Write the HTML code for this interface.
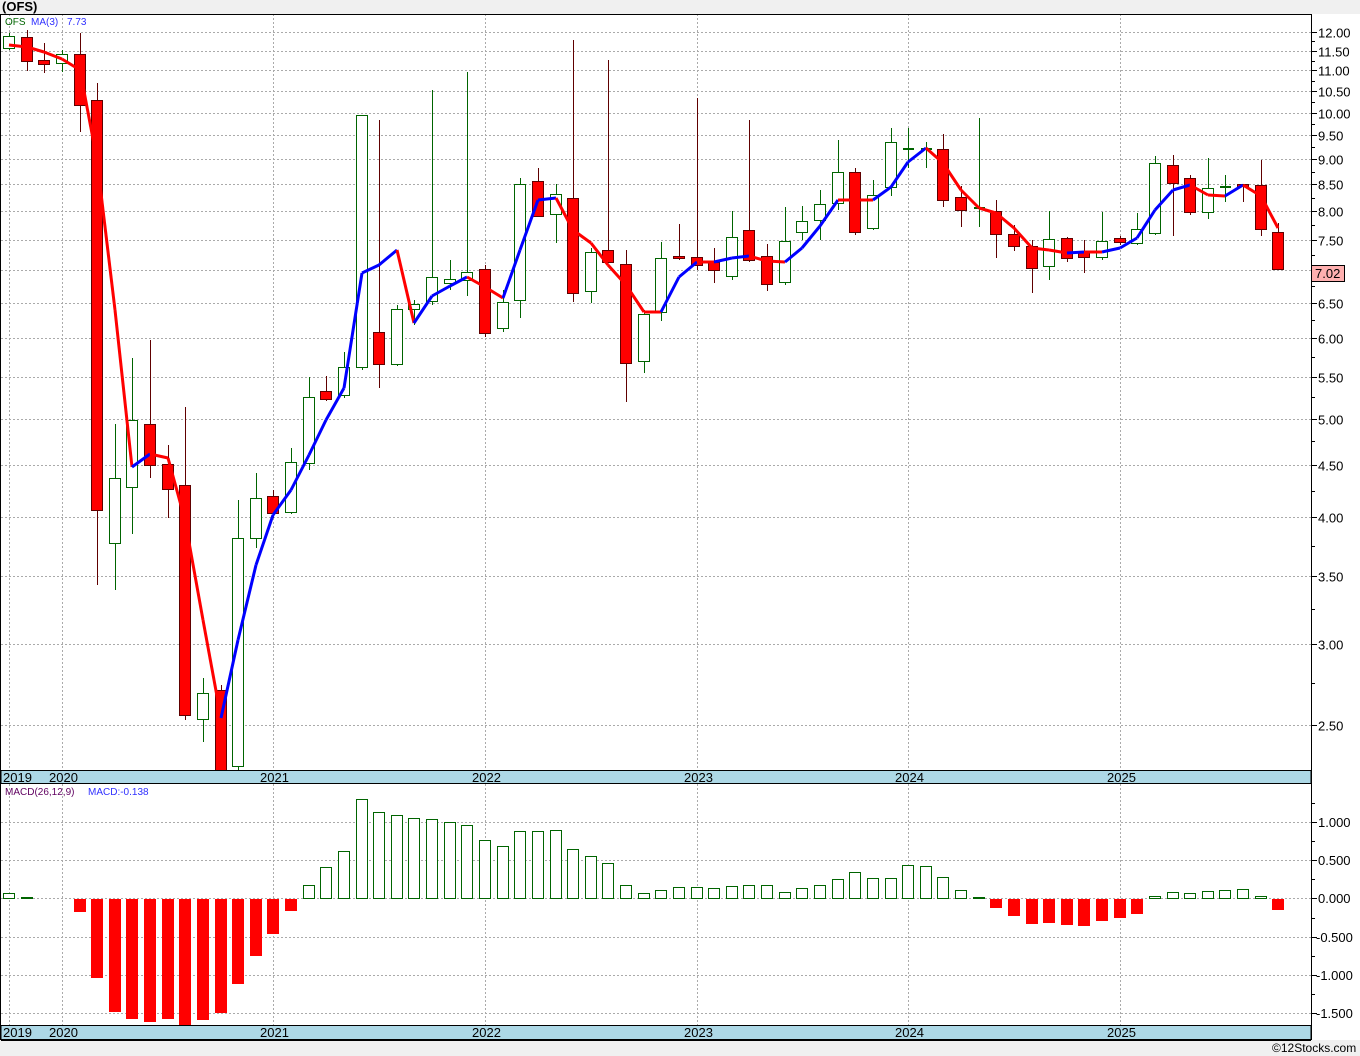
<!DOCTYPE html><html><head><meta charset="utf-8"><style>
body{margin:0;background:#f0f0f0;}
svg{display:block;font-family:"Liberation Sans",Tahoma,sans-serif;}
</style></head><body>
<svg id="s" width="1360" height="1056" xmlns="http://www.w3.org/2000/svg">
<rect x="0" y="0" width="1360" height="1056" fill="#f0f0f0"/>
<rect x="1" y="14" width="1310" height="1026" fill="#fff"/>
<rect x="1311" y="14" width="49" height="1026" fill="#fff"/>
<text x="2" y="11" font-size="13" font-weight="bold" fill="#000">(OFS)</text>
<g id="g"></g>
</svg>
<script>
var g=document.getElementById('g'),h='';
function ln(x1,y1,x2,y2,c,w,d){h+='<line x1="'+x1+'" y1="'+y1+'" x2="'+x2+'" y2="'+y2+'" stroke="'+c+'" stroke-width="'+(w||1)+'"'+(d?' stroke-dasharray="'+d+'"':'')+'/>';}
function tx(x,y,t,c,s){h+='<text x="'+x+'" y="'+y+'" font-size="'+(s||13)+'" fill="'+(c||'#000')+'">'+t+'</text>';}
function py(p){return 32+Math.log(12/p)*441.8;}
var P=[12,11.5,11,10.5,10,9.5,9,8.5,8,7.5,7,6.5,6,5.5,5,4.5,4,3.5,3,2.5];
P.forEach(function(p){var y=Math.round(py(p))+.5;ln(1,y,1311,y,'#aaa',1,'2,2');ln(1311,y,1317,y,'#000');if(p!=7)tx(1318,y+5,p.toFixed(2),'#000',13);});
for(var i=0;i<P.length-1;i++){var y=Math.round(py((P[i]+P[i+1])/2))+.5;ln(1311,y,1315,y,'#000');}
var YX=[9,62,273,485,697,908,1120];
YX.forEach(function(x){ln(x+.5,14,x+.5,770,'#aaa',1,'2,2');ln(x+.5,784,x+.5,1025,'#aaa',1,'2,2');});
var M=[[822,'1.000'],[860,'0.500'],[898,'0.000'],[937,'-0.500'],[975,'-1.000'],[1013,'-1.500']];
M.forEach(function(m){ln(1,m[0]+.5,1311,m[0]+.5,'#aaa',1,'2,2');ln(1311,m[0]+.5,1317,m[0]+.5,'#000');tx(m[0]==822||m[0]==860||m[0]==898?1318:1316,m[0]+5,m[1]);});
[803,841,879,918,956,994].forEach(function(y){ln(1311,y+.5,1315,y+.5,'#000');});
var C=[[36,48,33,50,1],[37,61,30,71,0],[60,64,43,73,0],[54,63,50,72,1],[54,105,33,132,0],[100,510,83,585,0],[478,543,424,590,1],[420,487,358,534,1],[424,465,340,478,0],[464,489,445,518,0],[485,715,407,720,0],[693,719,678,742,1],[690,770,685,770,0],[538,766,500,770,1],[498,538,473,548,1],[496,513,490,518,0],[462,512,448,514,1],[397,463,377,470,1],[391,399,376,401,0],[367,395,352,398,1],[115,367,115,370,1],[332,364,120,388,0],[309,364,305,366,1],[304,309,300,325,1],[277,301,90,305,1],[279,283,260,290,1],[272,280,72,296,1],[269,333,265,337,0],[302,328,290,332,1],[184,300,178,318,1],[181,216,168,216,0],[194,214,184,243,1],[198,293,40,302,0],[252,291,248,303,1],[250,262,60,263,0],[264,363,250,402,0],[314,361,310,373,1],[258,312,242,321,1],[256,258,224,260,0],[257,265,98,270,0],[262,270,248,283,0],[237,276,211,280,1],[230,260,120,262,0],[256,284,244,291,0],[241,282,207,285,1],[221,232,206,240,1],[204,220,190,240,1],[172,203,140,210,1],[172,232,168,235,0],[195,228,180,230,1],[142,187,128,196,1],[148,150,128,168,1],[148,150,142,168,1],[149,200,134,207,0],[197,210,186,227,0],[207,209,118,227,1],[211,234,200,258,0],[234,246,225,251,0],[246,268,240,293,0],[239,266,211,280,1],[238,258,237,262,0],[251,257,240,273,0],[241,257,212,260,1],[238,242,236,245,0],[229,243,213,245,1],[163,233,156,235,1],[165,183,155,236,0],[178,212,175,215,0],[188,212,158,219,1],[186,188,175,202,1],[184,186,184,202,0],[185,229,160,236,0],[232,269,223,269,0]];
function cx(i){return Math.round(9+17.63*i);}
C.forEach(function(c,i){var x=cx(i),col=c[4]?'#006400':'#600000';
ln(x+.5,c[2],x+.5,c[3],col);
var hh=Math.max(c[1]-c[0],2);
if(hh<=3&&c[4]){ln(x-5,c[0]+1,x+6,c[0]+1,col,2);}
else h+='<rect x="'+(x-5.5)+'" y="'+(c[0]+.5)+'" width="11" height="'+hh+'" fill="'+(c[4]?'#fff':'#ff0000')+'" stroke="'+col+'"/>';});
var MA=[45,47,52,59,70,160,310,467,454,458,520,620,718,640,565,515,490,455,420,388,273,265,250,323,296,286,277,287,298,250,200,198,230,243,265,285,312,312,277,262,262,258,256,261,262,248,226,200,200,200,187,162,148,163,190,208,213,228,248,250,253,252,252,248,238,210,190,185,195,196,185,196,228];
for(var i=1;i<MA.length;i++){ln(cx(i-1),MA[i-1],cx(i),MA[i],MA[i]<MA[i-1]?'#0000ff':'#ff0000',3);}
tx(5,25,'OFS','#006400',10);tx(31,25,'MA(3)','#3030ff',10);tx(67,25,'7.73','#3030ff',10);
h+='<rect x="1311.5" y="265.5" width="33" height="16" fill="#ffb0b0" stroke="#000"/>';tx(1315,278,'7.02');
var B=[893,897,898,898,911,977,1011,1018,1021,1018,1024,1019,1012,983,955,933,910,885,867,851,799,812,815,818,819,822,825,840,846,831,831,830,849,856,863,885,893,890,887,887,888,886,885,885,892,888,885,879,872,878,878,865,866,877,890,897,907,915,923,922,924,925,920,917,913,896,892,893,891,890,889,896,909];
B.forEach(function(b,i){var x=cx(i);if(b==898)return;
if(b<898)h+='<rect x="'+(x-5.5)+'" y="'+(b+.5)+'" width="11" height="'+(898-b)+'" fill="#fff" stroke="#006400"/>';
else h+='<rect x="'+(x-6)+'" y="899" width="12" height="'+(b-898)+'" fill="#ff0000"/>';});
tx(5,795,'MACD(26,12,9)','#600060',10);tx(88,795,'MACD:-0.138','#3030ff',10);
h+='<rect x="1" y="770.5" width="1310" height="13" fill="#add8e6" stroke="#000"/>';
h+='<rect x="1" y="1025.5" width="1310" height="14" fill="#add8e6" stroke="#000"/>';
var YL=[[3,'2019'],[49,'2020'],[260,'2021'],[472,'2022'],[684,'2023'],[895,'2024'],[1107,'2025']];
YL.forEach(function(l){tx(l[0],782,l[1]);tx(l[0],1037,l[1]);});
ln(1311.5,14,1311.5,1040,'#000');ln(0,14.5,1312,14.5,'#000');ln(.5,14,.5,1040,'#000');
ln(1,1040.5,1311,1040.5,'#000');
h+='<rect x="1311" y="1041" width="49" height="15" fill="#f0f0f0"/>';
tx(1272,1052,'©12Stocks.com','#000',12);
g.innerHTML=h;
</script>
</body></html>
